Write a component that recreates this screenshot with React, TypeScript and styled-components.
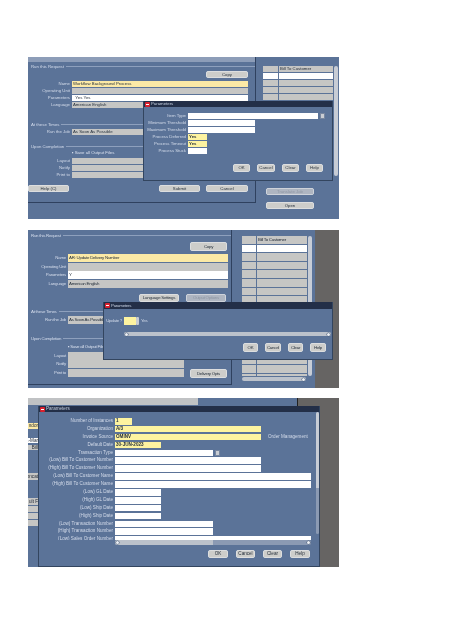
import React from "react";
import styled, { createGlobalStyle } from "styled-components";

const Global = createGlobalStyle`
  html, body { margin: 0; padding: 0; background: #fff; }
  body { font-family: "Liberation Sans", Arial, sans-serif; }
`;

const Page = styled.div`
  width: 474px;
  height: 632px;
  padding: 57px 0 0 28px;
  box-sizing: border-box;
  overflow: hidden;
  display: flex;
  flex-direction: column;
`;

const Shot = styled.section<{ $h: number; $mt?: number; $font: number; $row: number; $pitch: number; $ls?: number }>`
  --font: ${(p) => p.$font}px;
  --row: ${(p) => p.$row}px;
  --pitch: ${(p) => p.$pitch}px;
  position: relative;
  flex: none;
  display: flex;
  width: 311px;
  height: ${(p) => p.$h}px;
  margin-top: ${(p) => p.$mt ?? 0}px;
  overflow: hidden;
  background: #5b7398;
  font-size: var(--font);
  letter-spacing: ${(p) => p.$ls ?? 0}px;
  line-height: var(--row);
  color: #1c2430;
  filter: blur(0.35px);
`;

const MainWin = styled.div<{ $w: number; $pt: number; $bottom: number }>`
  flex: none;
  width: ${(p) => p.$w}px;
  height: calc(100% - ${(p) => p.$bottom}px);
  padding-top: ${(p) => p.$pt}px;
  box-sizing: border-box;
  border-right: 1px solid #2f415f;
  border-bottom: 1px solid #2f415f;
  display: flex;
  flex-direction: column;
`;

const WinTitle = styled.div`
  height: 5px;
  margin-top: -5px;
  background: #8d9db8;
`;

const Legend = styled.div<{ $mt: number }>`
  margin-top: ${(p) => p.$mt}px;
  display: flex;
  align-items: center;
  gap: 2px;
  padding-left: 3px;
  color: #d5dded;
  line-height: 5px;
  white-space: nowrap;
  &::after {
    content: "";
    flex: 1;
    height: 1px;
    background: #8ea0bd;
  }
`;

const Rows = styled.div<{ $mt: number }>`
  margin-top: ${(p) => p.$mt}px;
  display: flex;
  flex-direction: column;
  gap: calc(var(--pitch) - var(--row));
`;

const Row = styled.div<{ $label: number }>`
  display: grid;
  grid-template-columns: ${(p) => p.$label}px auto auto 1fr;
  column-gap: 2px;
  align-items: center;
  justify-content: start;
  height: var(--row);
`;

const Label = styled.span`
  display: flex;
  justify-content: flex-end;
  color: #d3dbea;
  white-space: nowrap;
`;

const toneColor = { yellow: "#fdf3a0", cream: "#fbe9a6", white: "#ffffff", gray: "#c6c6c4" };

const Field = styled.div<{ $w: number; $tone: keyof typeof toneColor; $bold?: boolean }>`
  width: ${(p) => p.$w}px;
  height: var(--row);
  background: ${(p) => toneColor[p.$tone]};
  padding-left: 1px;
  box-sizing: border-box;
  overflow: hidden;
  white-space: pre;
  color: #26303c;
  font-weight: ${(p) => (p.$bold ? 700 : 400)};
`;

const Note = styled.span<{ $pl: number }>`
  color: #d3dbea;
  white-space: nowrap;
  padding-left: ${(p) => p.$pl}px;
`;

const Lov = styled.div`
  width: 5px;
  height: var(--row);
  background: #c9cdd3;
  border: 1px solid #77869f;
  box-sizing: border-box;
`;

const BtnRow = styled.div<{ $mt: number; $pl?: number; $gap: number }>`
  display: flex;
  gap: ${(p) => p.$gap}px;
  margin-top: ${(p) => p.$mt}px;
  padding-left: ${(p) => p.$pl ?? 0}px;
`;

const Btn = styled.div<{ $w: number; $h: number; $ml?: number; $dim?: boolean }>`
  flex: none;
  width: ${(p) => p.$w}px;
  height: ${(p) => p.$h}px;
  margin-left: ${(p) => p.$ml ?? 0}px;
  line-height: ${(p) => p.$h}px;
  text-align: center;
  white-space: nowrap;
  overflow: hidden;
  border-radius: 3px;
  background: ${(p) => (p.$dim ? "#aeb5c1" : "#cdcdca")};
  color: ${(p) => (p.$dim ? "#8e96a3" : "#26303c")};
  box-shadow: 0 0 0 0.5px #eef0f3 inset;
`;

const Check = styled.div<{ $pl: number; $mt: number }>`
  margin-top: ${(p) => p.$mt}px;
  padding-left: ${(p) => p.$pl}px;
  color: #d9e0ee;
  white-space: nowrap;
`;

const Side = styled.div<{ $pl: number; $pt: number; $pr?: number }>`
  flex: none;
  height: 100%;
  padding: ${(p) => p.$pt}px ${(p) => p.$pr ?? 0}px 0 ${(p) => p.$pl}px;
  box-sizing: border-box;
  display: flex;
  flex-direction: column;
`;

const TableWrap = styled.div`
  display: flex;
  gap: 1px;
`;

const Table = styled.div<{ $c1: number; $c2: number; $h: number }>`
  display: grid;
  grid-template-columns: ${(p) => p.$c1}px ${(p) => p.$c2}px;
  grid-auto-rows: calc(var(--pitch) - 1px);
  column-gap: 1px;
  row-gap: 1px;
  height: ${(p) => p.$h}px;
  overflow: hidden;
`;

const Cell = styled.div<{ $tone: "white" | "gray" }>`
  background: ${(p) => toneColor[p.$tone]};
  padding-left: 1px;
  white-space: nowrap;
`;

const VBar = styled.div<{ $w: number; $h: number; $fill?: number }>`
  width: ${(p) => p.$w}px;
  height: ${(p) => p.$h}px;
  background: linear-gradient(#c7ccd5 ${(p) => p.$fill ?? 100}%, #8b9ab3 ${(p) => p.$fill ?? 100}%);
  border-radius: 2px;
`;

const HBar = styled.div<{ $w: number; $h: number; $mt: number; $ml: number; $fill?: number }>`
  width: ${(p) => p.$w}px;
  height: ${(p) => p.$h}px;
  margin: ${(p) => p.$mt}px 0 0 ${(p) => p.$ml}px;
  background: linear-gradient(90deg, #bcc2cb ${(p) => p.$fill ?? 100}%, #8b9ab3 ${(p) => p.$fill ?? 100}%);
  border-radius: 2px;
  display: flex;
  justify-content: space-between;
  align-items: center;
  padding: 0 1px;
  box-sizing: border-box;
`;

const Thumb = styled.div`
  width: 3px;
  height: 3px;
  border-radius: 50%;
  background: #eef1f5;
  box-shadow: 0 0 0 0.5px #4d5f7c;
`;

const Dim = styled.div`
  flex: 1;
  align-self: stretch;
  background: #666463;
`;

const Dialog = styled.div<{ $x: number; $y: number; $w: number; $h: number }>`
  position: absolute;
  left: ${(p) => p.$x}px;
  top: ${(p) => p.$y}px;
  width: ${(p) => p.$w}px;
  height: ${(p) => p.$h}px;
  background: #5b7398;
  border: 1px solid #33455f;
  border-top: none;
  box-sizing: border-box;
  display: flex;
  flex-direction: column;
`;

const DlgTitle = styled.div<{ $h: number }>`
  flex: none;
  height: ${(p) => p.$h}px;
  background: #232f48;
  color: #c5cfdf;
  line-height: ${(p) => p.$h}px;
  display: flex;
  align-items: center;
  gap: 1px;
  padding-left: 1px;
`;

const Close = styled.div`
  width: 5px;
  height: 5px;
  background: #d8202e;
  border-radius: 1px;
  position: relative;
  &::after {
    content: "";
    position: absolute;
    left: 1px;
    top: 2px;
    width: 3px;
    height: 1px;
    background: #fff;
  }
`;

const Strip = styled.div`
  flex: none;
  width: 10px;
  height: 100%;
  display: flex;
  flex-direction: column;
`;

const StripCell = styled.div<{ $mt: number; $h: number; $tone: keyof typeof toneColor }>`
  display: flex;
  justify-content: flex-end;
  margin-top: ${(p) => p.$mt}px;
  height: ${(p) => p.$h}px;
  line-height: ${(p) => p.$h}px;
  background: ${(p) => toneColor[p.$tone]};
  overflow: hidden;
  white-space: nowrap;
`;

const TopGray = styled.div`
  position: absolute;
  left: 0;
  top: 0;
  width: 170px;
  height: 7px;
  background: #c0c2c4;
`;

const Back3 = styled.div`
  flex: none;
  width: 259px;
  border-right: 1px solid #222;
`;

const Body3 = styled.div`
  display: flex;
  flex: none;
  flex-direction: column;
`;

const Spin = styled.div`
  width: 3px;
  height: var(--row);
  background: #c9cdd3;
  border-radius: 1px;
`;

const Clip = styled.div<{ $h: number; $mt: number }>`
  flex: none;
  height: ${(p) => p.$h}px;
  margin-top: ${(p) => p.$mt}px;
  overflow: hidden;
`;

const Inline = styled.div<{ $w: number }>`
  display: flex;
  width: ${(p) => p.$w}px;
`;

const Canvas3 = styled.div`
  display: flex;
  align-items: flex-start;
  gap: 1px;
`;

const rows1 = Array.from({ length: 17 });

const ParamRow = ({ label, w, tone, text, bold, lw, after }: { label: string; w: number; tone: keyof typeof toneColor; text?: string; bold?: boolean; lw: number; after?: React.ReactNode }) => (
  <Row $label={lw}>
    <Label>{label}</Label>
    <Field $w={w} $tone={tone} $bold={bold}>{text}</Field>
    {after}
  </Row>
);

const Title = () => (
  <>
    <Close />
    Parameters
  </>
);

const Shot1 = () => (
  <Shot $h={162} $font={4.3} $row={6} $pitch={7}>
    <MainWin $w={228} $pt={5} $bottom={16}>
      <WinTitle />
      <Legend $mt={2}>Run this Request</Legend>
      <BtnRow $mt={2} $pl={178} $gap={0}><Btn $w={42} $h={7}>Copy</Btn></BtnRow>
      <Rows $mt={3}>
        <ParamRow lw={42} label="Name" w={176} tone="cream" text="Workflow Background Process" />
        <ParamRow lw={42} label="Operating Unit" w={176} tone="gray" />
        <ParamRow lw={42} label="Parameters" w={176} tone="white" text="  Yes Yes" />
        <ParamRow lw={42} label="Language" w={176} tone="gray" text="American English" />
      </Rows>
      <Legend $mt={14}>At these Times</Legend>
      <Rows $mt={2}>
        <ParamRow lw={42} label="Run the Job" w={176} tone="gray" text="As Soon As Possible" />
      </Rows>
      <Legend $mt={9}>Upon Completion</Legend>
      <Check $mt={1} $pl={44}>▪ Save all Output Files</Check>
      <Rows $mt={2}>
        <ParamRow lw={42} label="Layout" w={176} tone="gray" />
        <ParamRow lw={42} label="Notify" w={176} tone="gray" />
        <ParamRow lw={42} label="Print to" w={176} tone="gray" />
      </Rows>
      <BtnRow $mt={7} $gap={6}>
        <Btn $w={41} $h={7}>Help (C)</Btn>
        <Btn $w={41} $h={7} $ml={84}>Submit</Btn>
        <Btn $w={42} $h={7}>Cancel</Btn>
      </BtnRow>
    </MainWin>
    <Side $pl={7} $pt={9}>
      <TableWrap>
        <Table $c1={15} $c2={54} $h={110}>
          <Cell $tone="gray" />
          <Cell $tone="gray">Bill To Customer</Cell>
          {rows1.map((_, i) => (
            <React.Fragment key={i}>
              <Cell $tone={i === 0 ? "white" : "gray"} />
              <Cell $tone={i === 0 ? "white" : "gray"} />
            </React.Fragment>
          ))}
        </Table>
        <VBar $w={4} $h={110} />
      </TableWrap>
      <BtnRow $mt={12} $pl={3} $gap={0}><Btn $w={48} $h={7} $dim>Translate Job</Btn></BtnRow>
      <BtnRow $mt={7} $pl={3} $gap={0}><Btn $w={48} $h={7}>Open</Btn></BtnRow>
    </Side>
    <Dialog $x={115} $y={44} $w={190} $h={80}>
      <DlgTitle $h={6}><Title /></DlgTitle>
      <Rows $mt={6}>
        <ParamRow lw={42} label="Item Type" w={130} tone="white" after={<Lov />} />
        <ParamRow lw={42} label="Minimum Threshold" w={67} tone="white" />
        <ParamRow lw={42} label="Maximum Threshold" w={67} tone="white" />
        <ParamRow lw={42} label="Process Deferred" w={19} tone="yellow" text="Yes" bold />
        <ParamRow lw={42} label="Process Timeout" w={19} tone="yellow" text="Yes" bold />
        <ParamRow lw={42} label="Process Stuck" w={19} tone="white" />
      </Rows>
      <BtnRow $mt={10} $pl={89} $gap={7}>
        <Btn $w={17} $h={8}>OK</Btn>
        <Btn $w={18} $h={8}>Cancel</Btn>
        <Btn $w={17} $h={8}>Clear</Btn>
        <Btn $w={17} $h={8}>Help</Btn>
      </BtnRow>
    </Dialog>
  </Shot>
);

const Shot2 = () => (
  <Shot $h={158} $mt={11} $font={4.4} $ls={-0.25} $row={8} $pitch={8.6}>
    <MainWin $w={204} $pt={3} $bottom={3}>
      <Legend $mt={0}>Run this Request</Legend>
      <BtnRow $mt={4} $pl={162} $gap={0}><Btn $w={37} $h={9}>Copy</Btn></BtnRow>
      <Rows $mt={3}>
        <ParamRow lw={38} label="Name" w={160} tone="cream" text="AR: Update Delivery Number" />
        <ParamRow lw={38} label="Operating Unit" w={160} tone="gray" />
        <ParamRow lw={38} label="Parameters" w={160} tone="white" text="Y" />
        <ParamRow lw={38} label="Language" w={160} tone="gray" text="American English" />
      </Rows>
      <BtnRow $mt={6} $pl={111} $gap={7}>
        <Btn $w={40} $h={8}>Language Settings</Btn>
        <Btn $w={40} $h={8} $dim>Output Options</Btn>
      </BtnRow>
      <Legend $mt={7}>At these Times</Legend>
      <Rows $mt={2}>
        <ParamRow lw={38} label="Run the Job" w={116} tone="gray" text="As Soon As Possible" />
      </Rows>
      <Legend $mt={12}>Upon Completion</Legend>
      <Check $mt={2} $pl={40}>▪ Save all Output Files</Check>
      <Rows $mt={1}>
        <Row $label={38}>
          <Label>Layout</Label>
          <Field $w={116} $tone="gray" />
          <Btn $w={37} $h={8} $ml={4} />
        </Row>
        <ParamRow lw={38} label="Notify" w={116} tone="gray" />
        <Row $label={38}>
          <Label>Print to</Label>
          <Field $w={116} $tone="gray" />
          <Btn $w={37} $h={9} $ml={4}>Delivery Opts</Btn>
        </Row>
      </Rows>
    </MainWin>
    <Side $pl={10} $pt={6} $pr={3}>
      <TableWrap>
        <Table $c1={14} $c2={50} $h={140}>
          <Cell $tone="gray" />
          <Cell $tone="gray">Bill To Customer</Cell>
          {rows1.map((_, i) => (
            <React.Fragment key={i}>
              <Cell $tone={i === 0 ? "white" : "gray"} />
              <Cell $tone={i === 0 ? "white" : "gray"} />
            </React.Fragment>
          ))}
        </Table>
        <VBar $w={4} $h={140} />
      </TableWrap>
      <HBar $w={64} $h={4} $mt={1} $ml={0}><span /><Thumb /></HBar>
    </Side>
    <Dim />
    <Dialog $x={75} $y={72} $w={230} $h={58}>
      <DlgTitle $h={7}><Title /></DlgTitle>
      <Rows $mt={8}>
        <Row $label={18}>
          <Label>Update ?</Label>
          <Inline $w={15}>
            <Field $w={12} $tone="yellow" />
            <Spin />
          </Inline>
          <Note $pl={0}>Yes</Note>
        </Row>
      </Rows>
      <HBar $w={207} $h={4} $mt={7} $ml={20}><Thumb /><Thumb /></HBar>
      <BtnRow $mt={7} $pl={139} $gap={7}>
        <Btn $w={15} $h={9}>OK</Btn>
        <Btn $w={16} $h={9}>Cancel</Btn>
        <Btn $w={15} $h={9}>Clear</Btn>
        <Btn $w={16} $h={9}>Help</Btn>
      </BtnRow>
    </Dialog>
  </Shot>
);

const lowHigh: { label: string; w: number; tone: keyof typeof toneColor; text?: string; bold?: boolean; note?: string; lov?: boolean }[] = [
  { label: "Number of Instances", w: 17, tone: "yellow", text: "1", bold: true },
  { label: "Organization", w: 146, tone: "yellow", text: "A/3", bold: true },
  { label: "Invoice Source", w: 146, tone: "yellow", text: "OMINV", bold: true, note: "Order Management" },
  { label: "Default Date", w: 46, tone: "yellow", text: "30-JUN-2023", bold: true },
  { label: "Transaction Type", w: 98, tone: "white", lov: true },
  { label: "(Low) Bill To Customer Number", w: 146, tone: "white" },
  { label: "(High) Bill To Customer Number", w: 146, tone: "white" },
  { label: "(Low) Bill To Customer Name", w: 196, tone: "white" },
  { label: "(High) Bill To Customer Name", w: 196, tone: "white" },
  { label: "(Low) GL Date", w: 46, tone: "white" },
  { label: "(High) GL Date", w: 46, tone: "white" },
  { label: "(Low) Ship Date", w: 46, tone: "white" },
  { label: "(High) Ship Date", w: 46, tone: "white" },
  { label: "(Low) Transaction Number", w: 98, tone: "white" },
  { label: "(High) Transaction Number", w: 98, tone: "white" },
  { label: "(Low) Sales Order Number", w: 196, tone: "white" },
];

const Shot3 = () => (
  <Shot $h={169} $mt={10} $font={4.6} $row={6.6} $pitch={7.9}>
    <Strip>
      <StripCell $mt={25} $h={6} $tone="cream">ndor</StripCell>
      <StripCell $mt={9} $h={5} $tone="white">1-Mar</StripCell>
      <StripCell $mt={2} $h={5} $tone="gray">Bill</StripCell>
      <StripCell $mt={23} $h={7} $tone="gray">Concat</StripCell>
      <StripCell $mt={18} $h={7} $tone="gray">ult F</StripCell>
      <StripCell $mt={1} $h={6} $tone="gray" />
      <StripCell $mt={1} $h={6} $tone="gray" />
      <StripCell $mt={1} $h={6} $tone="gray" />
    </Strip>
    <Back3 />
    <Dim />
    <TopGray />
    <Dialog $x={10} $y={8} $w={282} $h={161}>
      <DlgTitle $h={6}><Title /></DlgTitle>
      <Canvas3>
        <Body3>
          <Clip $h={122} $mt={6}>
            <Rows $mt={0}>
              {lowHigh.map((r) => (
                <ParamRow
                  key={r.label}
                  lw={74}
                  label={r.label}
                  w={r.w}
                  tone={r.tone}
                  text={r.text}
                  bold={r.bold}
                  after={r.lov ? <Lov /> : r.note ? <Note $pl={5}>{r.note}</Note> : undefined}
                />
              ))}
            </Rows>
          </Clip>
          <HBar $w={196} $h={5} $mt={0} $ml={76} $fill={50}><Thumb /><Thumb /></HBar>
        </Body3>
        <VBar $w={5} $h={122} $fill={62} />
      </Canvas3>
      <BtnRow $mt={5} $pl={169} $gap={8}>
        <Btn $w={20} $h={8}>OK</Btn>
        <Btn $w={19} $h={8}>Cancel</Btn>
        <Btn $w={19} $h={8}>Clear</Btn>
        <Btn $w={20} $h={8}>Help</Btn>
      </BtnRow>
    </Dialog>
  </Shot>
);

export default function App() {
  return (
    <Page>
      <Global />
      <Shot1 />
      <Shot2 />
      <Shot3 />
    </Page>
  );
}
